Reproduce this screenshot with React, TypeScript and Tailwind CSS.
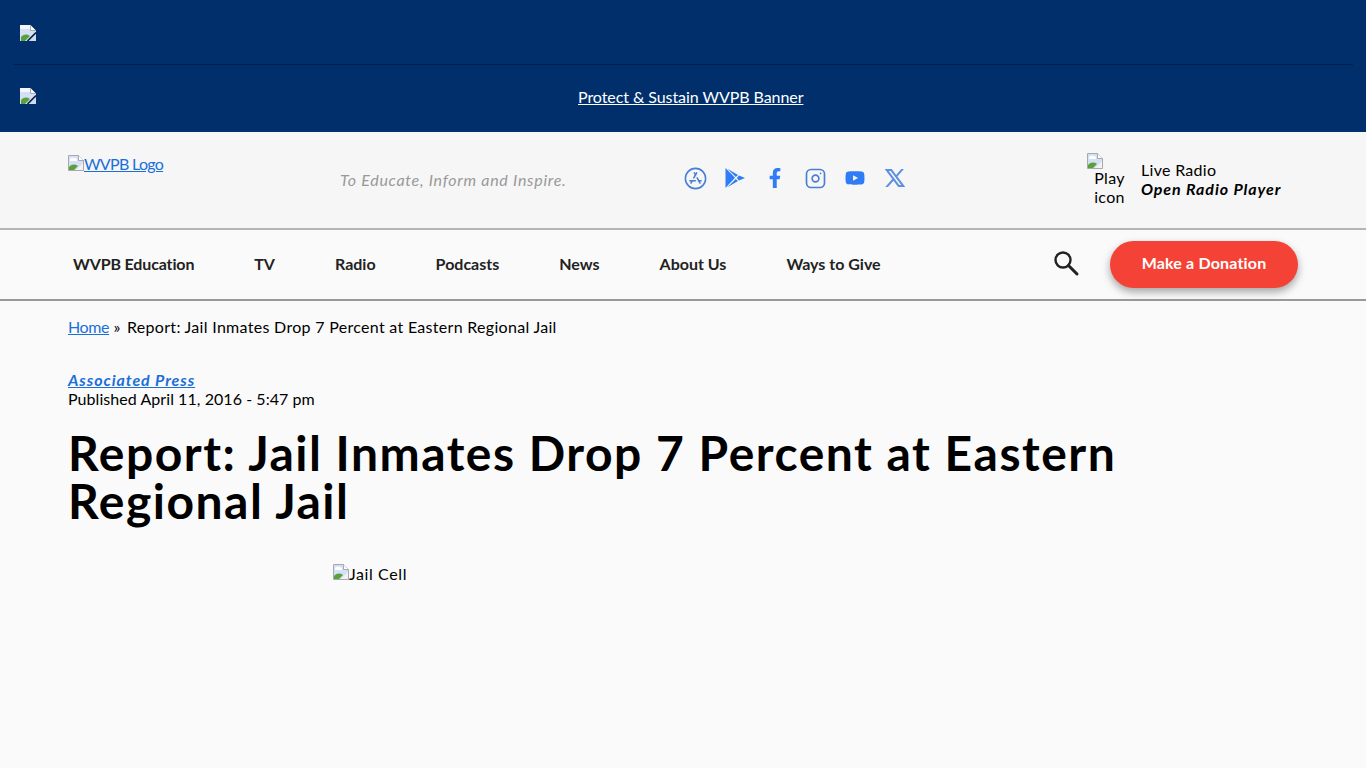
import React from "react";
import { FaFacebookF, FaYoutube } from "react-icons/fa";
import { TbBrandAppstore, TbBrandInstagram } from "react-icons/tb";
import { RiTwitterXLine } from "react-icons/ri";

function Broken({ className = "" }: { className?: string }) {
  return (
    <svg width="16" height="16" viewBox="0 0 16 16" className={"shrink-0 " + className}>
      <path d="M0.5 0.5H10.5L15.5 5.5V15.5H0.5Z" fill="#d3e0f5" stroke="#a9a9a9" />
      <path d="M10.5 0.5V5.5H15.5" fill="#fff" stroke="#a9a9a9" />
      <path d="M2 4c2-2 5-1 7 0v2H2Z" fill="#fff" />
      <path d="M1 15v-3c3-3 6-3 9-1l-4 4Z" fill="#5aa13c" />
      <path d="M15 15H8l7-7Z" fill="#f2f2f2" />
    </svg>
  );
}

function BrokenDark() {
  return (
    <svg width="16" height="16" viewBox="0 0 16 16" className="shrink-0">
      <path d="M0 0H10.5L16 5.5V16H0Z" fill="#d3e0f5" />
      <path d="M0 0H10V4H0Z" fill="#f4f7fc" />
      <path d="M10.5 0.5V5.5H15.5" fill="#fff" stroke="#a9a9a9" />
      <path d="M1 16v-4c3-3 6-3 9-1l-5 5Z" fill="#5aa13c" />
      <path d="M16 16H9L16 9Z" fill="#cfdcef" />
      <path d="M7.5 16 16 7.5" stroke="#0b1f3f" strokeWidth="1.6" />
    </svg>
  );
}

function GooglePlay() {
  return (
    <svg width="20" height="20" viewBox="0 0 20 20" fill="#2f7cf6" className="shrink-0">
      <path d="M0.5 0 10 9.7 0.5 20Z" />
      <path d="M2.5 0.8 13 7 10.8 9.1Z" />
      <path d="M2.5 19.2 13 13 10.8 10.9Z" />
      <path d="M14 7.6 20 10 14 12.6 11.8 10Z" />
    </svg>
  );
}

function Cell({ children }: { children: React.ReactNode }) {
  return <div className="w-[20px] h-[20px] mr-[20px] flex items-center justify-center">{children}</div>;
}

const nav = ["TV", "Radio", "Podcasts", "News", "About Us", "Ways to Give"];

export default function App() {
  return (
    <div className="min-h-[768px] bg-[#fafafa] text-black text-[16px] leading-[19px] tracking-[0.3px] font-['Lato','Noto_Sans',sans-serif]">
      <div className="h-[132px] bg-[#002f6c] px-[13px] flex flex-col">
        <div className="h-[65px] border-b border-[#00204a] px-[7px] pt-[25px]">
          <BrokenDark />
        </div>
        <div className="h-[67px] px-[7px] pt-[23px] flex items-start">
          <BrokenDark />
          <a className="ml-[542px] -mt-[1px] text-white underline tracking-[-0.07px]">Protect &amp; Sustain WVPB Banner</a>
        </div>
      </div>

      <div className="h-[98px] bg-[#f6f6f6] border-b-2 border-[#b4b4b4] pl-[68px] flex items-start">
        <a className="w-[272px] pt-[23px] text-[#1a6fd9] underline flex items-start">
          <Broken />
          <span className="-mt-[1px] tracking-[-0.7px]">WVPB Logo</span>
        </a>
        <div className="w-[345px] pt-[38px] italic text-[#999999] tracking-[0.72px]">To Educate, Inform and Inspire.</div>
        <div className="w-[402px] pt-[36px] flex items-center text-[#2f7cf6]">
          <Cell><TbBrandAppstore size={27} strokeWidth={1.4} className="shrink-0 text-[#4a7fd6]" /></Cell>
          <Cell><GooglePlay /></Cell>
          <Cell><FaFacebookF size={20} className="shrink-0" /></Cell>
          <Cell><TbBrandInstagram size={27} strokeWidth={1.5} className="shrink-0 text-[#4a7fd6]" /></Cell>
          <Cell><FaYoutube size={20} className="shrink-0" /></Cell>
          <Cell><RiTwitterXLine size={24} className="shrink-0 text-[#5d8fe0]" /></Cell>
        </div>
        <div className="pt-[21px] flex">
          <div className="w-[45px] flex flex-col items-center">
            <Broken className="self-start" />
            <div className="text-center -mt-[1px]">Play<br />icon</div>
          </div>
          <div className="ml-[9px] pt-[7px]">
            <div>Live Radio</div>
            <div className="font-bold italic tracking-[0.9px]">Open Radio Player</div>
          </div>
        </div>
      </div>

      <div className="h-[71px] border-b-2 border-[#999999] bg-[#fafafa] pl-[73px] pr-[68px] flex items-center">
        <nav className="flex gap-[60px] font-bold text-[#222222] tracking-[0px] -mt-[2px]">
          <a className="tracking-[-0.14px]">WVPB Education</a>
          {nav.map((n) => (
            <a key={n}>{n}</a>
          ))}
        </nav>
        <div className="ml-auto flex items-center">
          <svg width="28" height="28" viewBox="0 0 28 28" fill="none" stroke="#222222" strokeWidth="2.4" className="mr-[30px] -mt-[4px] -ml-[1px]">
            <circle cx="11" cy="11" r="7.5" />
            <path d="M16.5 16.5 25 25" strokeLinecap="round" strokeWidth="3" />
          </svg>
          <a className="w-[188px] h-[47px] pb-[4px] rounded-full bg-[#f44336] text-white font-bold flex items-center justify-center shadow-[0_4px_8px_rgba(0,0,0,0.35)] -mt-[1px] tracking-[0.17px]">
            Make a Donation
          </a>
        </div>
      </div>

      <main className="pl-[68px] pr-[68px]">
        <div className="pt-[16px]">
          <a className="text-[#1a6fd9] underline tracking-[-0.4px]">Home</a> » <span className="ml-[2px]">Report: Jail Inmates Drop 7 Percent at Eastern Regional Jail</span>
        </div>
        <div className="mt-[34px]">
          <a className="block font-bold italic text-[#1a6fd9] underline tracking-[0.93px]">Associated Press</a>
          <div className="tracking-[0.06px]">Published April 11, 2016 - 5:47 pm</div>
        </div>
        <h1 className="mt-[21px] text-[48px] leading-[48px] font-bold max-w-[1100px] tracking-[1.5px]">
          Report: Jail Inmates Drop 7 Percent at Eastern Regional Jail
        </h1>
        <div className="mt-[39px] pl-[265px] flex items-start">
          <Broken />
          <span className="tracking-[0.6px]">Jail Cell</span>
        </div>
      </main>
    </div>
  );
}
